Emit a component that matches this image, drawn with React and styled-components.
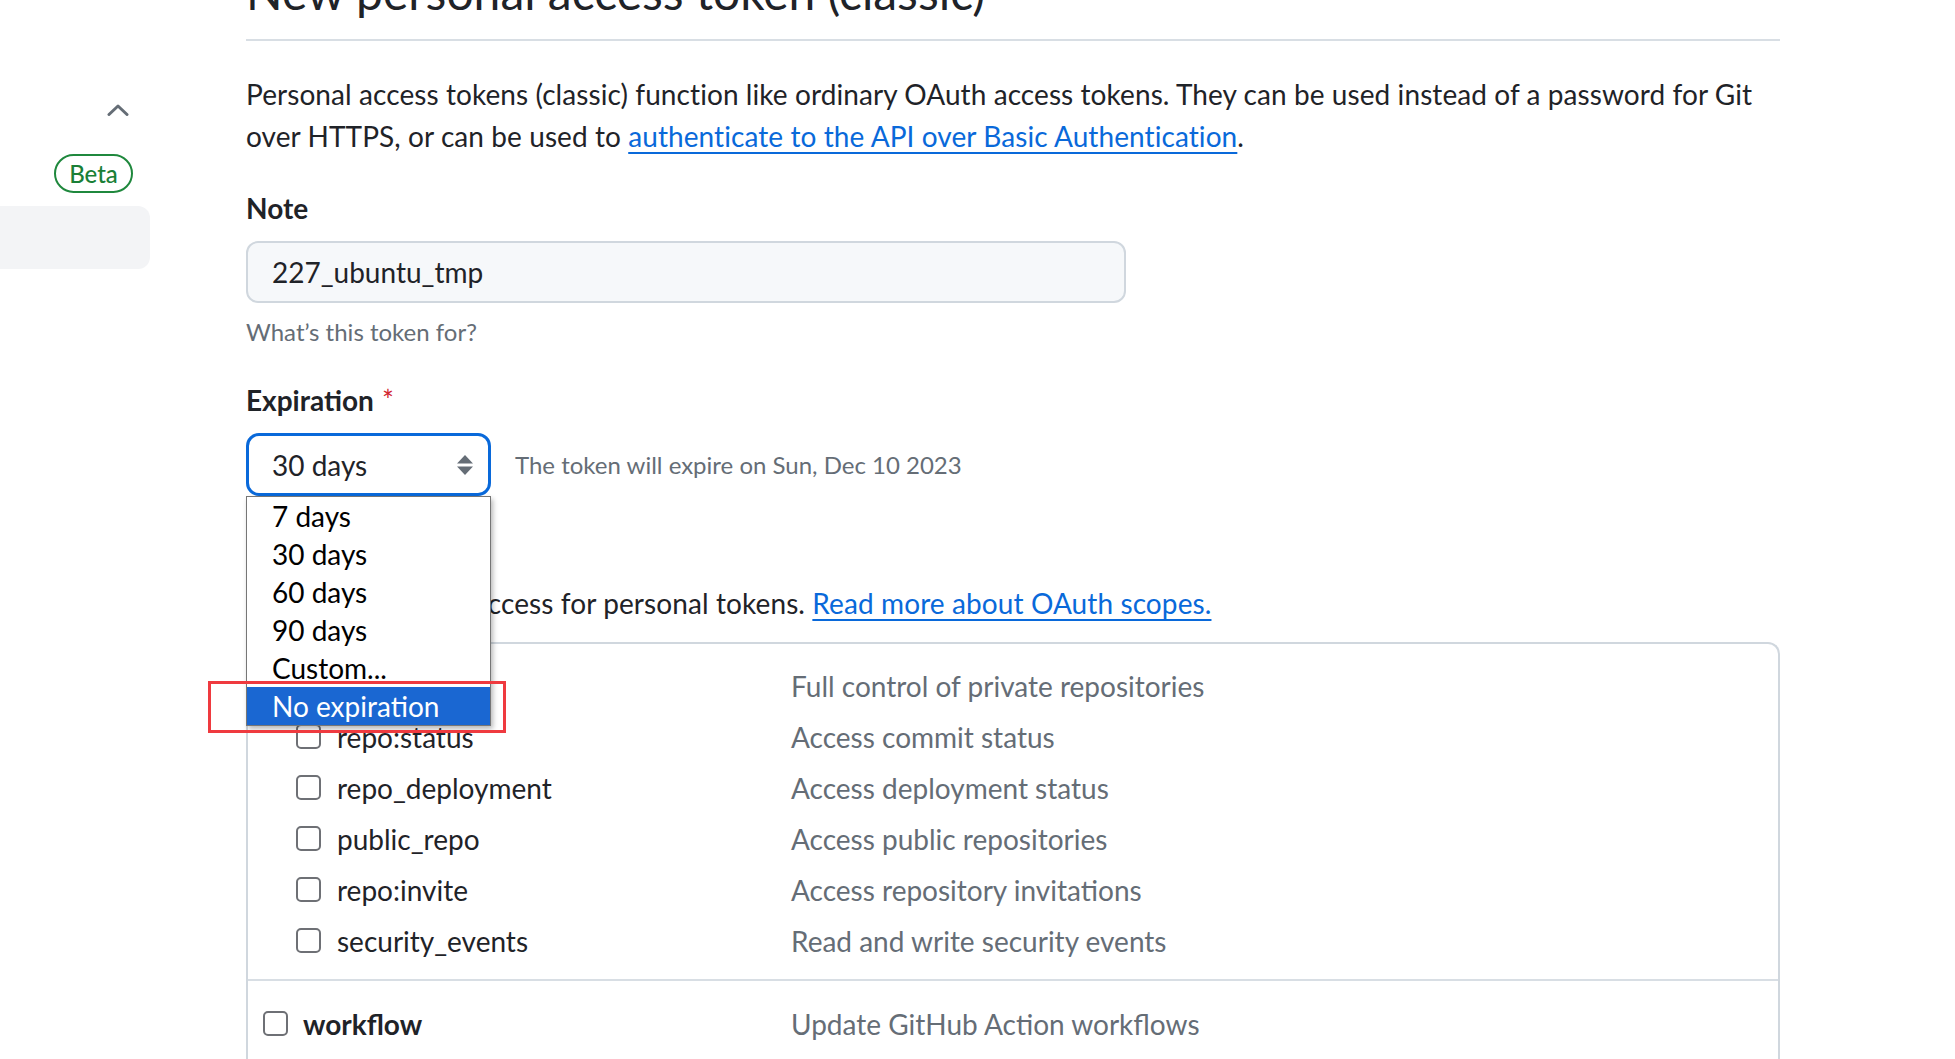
import React from "react";
import styled, { createGlobalStyle } from "styled-components";

const Global = createGlobalStyle`
  html, body { margin: 0; padding: 0; background: #ffffff; }
  body {
    font-family: Lato, "Noto Sans", "Liberation Sans", sans-serif;
    color: #1f2328;
    overflow: hidden;
  }
  * { box-sizing: border-box; }
`;

const Page = styled.div`
  display: grid;
  grid-template-columns: 246px 1534px;
  height: 1059px;
  overflow: hidden;
`;

const Sidebar = styled.aside`
  display: flex;
  flex-direction: column;
  align-items: flex-start;
`;

const CollapseButton = styled.button`
  margin: 104px 0 0 107px;
  padding: 0;
  border: 0;
  background: none;
  width: 22px;
  height: 12px;
  display: flex;
  color: #656d76;
`;

const BetaBadge = styled.span`
  margin: 38px 0 0 54px;
  height: 39px;
  width: 79px;
  display: inline-flex;
  align-items: center;
  justify-content: center;
  border: 2px solid #1f883d;
  border-radius: 999px;
  color: #1a7f37;
  font-size: 24px;
  font-weight: 500;
`;

const NavItem = styled.div`
  margin-top: 13px;
  width: 150px;
  height: 63px;
  background: #f3f4f6;
  border-radius: 0 12px 12px 0;
`;

const Main = styled.main`
  display: flex;
  flex-direction: column;
`;

const Subhead = styled.div`
  margin-top: -38px;
  padding-bottom: 17px;
  border-bottom: 2px solid #d8dee4;
`;

const Title = styled.h1`
  margin: 0;
  font-size: 48px;
  font-weight: 400;
  line-height: 60px;
`;

const Intro = styled.p`
  margin: 32px 0 0;
  font-size: 28px;
  line-height: 42px;
  letter-spacing: 0.08px;
`;

const Link = styled.a`
  color: #0969da;
  text-decoration: underline;
  text-underline-offset: 5px;
  text-decoration-thickness: 2px;
`;

const Label = styled.label`
  display: block;
  margin-top: ${(p) => p.$top}px;
  font-size: 28px;
  font-weight: 700;
  line-height: 42px;
`;

const Required = styled.span`
  color: #d1242f;
  font-weight: 400;
  margin-left: 8px;
`;

const TextInput = styled.div`
  margin-top: 12px;
  width: 880px;
  height: 62px;
  padding: 0 24px;
  display: flex;
  align-items: center;
  background: #f6f8fa;
  border: 2px solid #d0d7de;
  border-radius: 12px;
  font-size: 28px;
`;

const Hint = styled.p`
  margin: 11px 0 0;
  font-size: 24px;
  line-height: 36px;
  color: #656d76;
`;

const SelectRow = styled.div`
  margin-top: 12px;
  display: flex;
  align-items: center;
  gap: 24px;
`;

const SelectWrap = styled.div`
  position: relative;
  width: 245px;
  height: 63px;
`;

const SelectBox = styled.div`
  height: 100%;
  border: 3px solid #0969da;
  border-radius: 13px;
  display: flex;
  align-items: center;
  justify-content: space-between;
  padding: 0 15px 0 23px;
  font-size: 28px;
  background: #fff;
`;

const Options = styled.ul`
  position: absolute;
  top: 63px;
  left: 0;
  width: 245px;
  margin: 0;
  padding: 0;
  list-style: none;
  background: #fff;
  border: 1px solid #767676;
  box-shadow: 2px 3px 5px rgba(0, 0, 0, 0.28);
  z-index: 5;
`;

const Option = styled.li`
  height: 38px;
  padding-left: 25px;
  display: flex;
  align-items: center;
  font-size: 28px;
  color: ${(p) => (p.$active ? "#ffffff" : "#000000")};
  background: ${(p) => (p.$active ? "#1a67d2" : "transparent")};
`;

const Annotation = styled.div`
  position: absolute;
  left: -38px;
  top: 248px;
  width: 298px;
  height: 52px;
  border: 3px solid #ef3a3f;
  z-index: 6;
  pointer-events: none;
`;

const ExpiryNote = styled.span`
  font-size: 24px;
  color: #656d76;
`;

const ScopesText = styled.p`
  margin: 10px 0 0;
  font-size: 28px;
  line-height: 42px;
  letter-spacing: 0.1px;
`;

const ScopeTable = styled.div`
  margin-top: 18px;
  border: 2px solid #d0d7de;
  border-bottom: 0;
  border-radius: 12px 12px 0 0;
  display: flex;
  flex-direction: column;
`;

const ScopeGroup = styled.div`
  padding: 16px 0 13px;
  & + & {
    border-top: 2px solid #d8dee4;
    padding-top: 17px;
  }
`;

const ScopeRow = styled.div`
  display: grid;
  grid-template-columns: 543px 1fr;
  align-items: center;
  height: 51px;
`;

const ScopeName = styled.label`
  display: flex;
  align-items: center;
  gap: ${(p) => (p.$sub ? 16 : 15)}px;
  padding-left: ${(p) => (p.$sub ? 48 : 15)}px;
  font-size: 28px;
  font-weight: ${(p) => (p.$sub ? 400 : 700)};
`;

const Check = styled.span`
  width: 25px;
  height: 25px;
  border: 2px solid #6e7075;
  border-radius: 5px;
  background: #fff;
  flex: none;
`;

const ScopeDesc = styled.span`
  font-size: 28px;
  color: #656d76;
`;

function ChevronUp() {
  return (
    <svg width="22" height="12" viewBox="0 0 22 12" fill="none">
      <path d="M2 10.5 L11 2 L20 10.5" stroke="currentColor" strokeWidth="3" strokeLinecap="round" strokeLinejoin="round" />
    </svg>
  );
}

function SelectArrows() {
  return (
    <svg width="16" height="20" viewBox="0 0 16 20">
      <polygon points="0,8.5 8,0 16,8.5" fill="#656d76" />
      <polygon points="0,11.5 16,11.5 8,20" fill="#656d76" />
    </svg>
  );
}

const options = ["7 days", "30 days", "60 days", "90 days", "Custom...", "No expiration"];

const repoScopes = [
  ["repo:status", "Access commit status"],
  ["repo_deployment", "Access deployment status"],
  ["public_repo", "Access public repositories"],
  ["repo:invite", "Access repository invitations"],
  ["security_events", "Read and write security events"],
];

export default function App() {
  return (
    <>
      <Global />
      <Page>
        <Sidebar>
          <CollapseButton aria-label="Collapse">
            <ChevronUp />
          </CollapseButton>
          <BetaBadge>Beta</BetaBadge>
          <NavItem />
        </Sidebar>
        <Main>
          <Subhead>
            <Title>New personal access token (classic)</Title>
          </Subhead>
          <Intro>
            Personal access tokens (classic) function like ordinary OAuth access tokens. They can be used instead of a password for Git
            <br />
            over HTTPS, or can be used to <Link href="#">authenticate to the API over Basic Authentication</Link>.
          </Intro>

          <Label $top={30}>Note</Label>
          <TextInput>227_ubuntu_tmp</TextInput>
          <Hint>What’s this token for?</Hint>

          <Label $top={29}>
            Expiration<Required>*</Required>
          </Label>
          <SelectRow>
            <SelectWrap>
              <SelectBox>
                <span>30 days</span>
                <SelectArrows />
              </SelectBox>
              <Options>
                {options.map((o) => (
                  <Option key={o} $active={o === "No expiration"}>
                    {o}
                  </Option>
                ))}
              </Options>
              <Annotation />
            </SelectWrap>
            <ExpiryNote>The token will expire on Sun, Dec 10 2023</ExpiryNote>
          </SelectRow>

          <Label $top={34}>Select scopes</Label>
          <ScopesText>
            Scopes define the access for personal tokens. <Link href="#">Read more about OAuth scopes.</Link>
          </ScopesText>

          <ScopeTable>
            <ScopeGroup>
              <ScopeRow>
                <ScopeName>
                  <Check />
                  repo
                </ScopeName>
                <ScopeDesc>Full control of private repositories</ScopeDesc>
              </ScopeRow>
              {repoScopes.map(([name, desc]) => (
                <ScopeRow key={name}>
                  <ScopeName $sub>
                    <Check />
                    {name}
                  </ScopeName>
                  <ScopeDesc>{desc}</ScopeDesc>
                </ScopeRow>
              ))}
            </ScopeGroup>
            <ScopeGroup>
              <ScopeRow>
                <ScopeName>
                  <Check />
                  workflow
                </ScopeName>
                <ScopeDesc>Update GitHub Action workflows</ScopeDesc>
              </ScopeRow>
            </ScopeGroup>
          </ScopeTable>
        </Main>
      </Page>
    </>
  );
}
